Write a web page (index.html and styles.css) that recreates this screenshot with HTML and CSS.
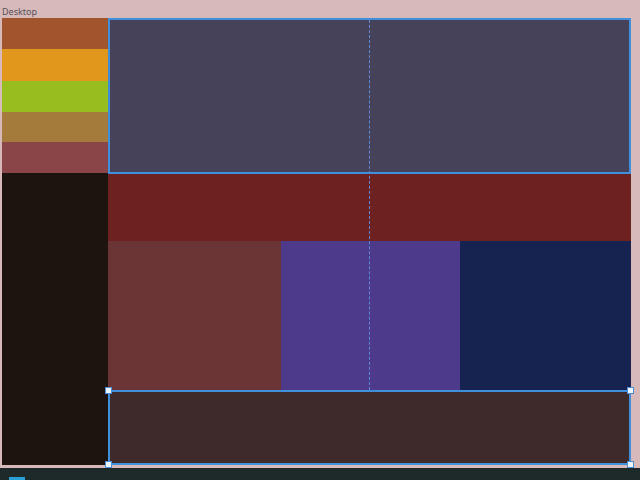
FILE: index.html
```html
<!DOCTYPE html>
<html>
<head>
<meta charset="utf-8">
<link rel="stylesheet" href="styles.css">
</head>
<body>
<div class="label">Desktop</div>
<div class="stage">
  <div class="side">
    <div class="sw s1"></div>
    <div class="sw s2"></div>
    <div class="sw s3"></div>
    <div class="sw s4"></div>
    <div class="sw s5"></div>
    <div class="rest"></div>
  </div>
  <div class="main">
    <div class="top"></div>
    <div class="red"></div>
    <div class="row">
      <div class="c1"></div>
      <div class="c2"></div>
      <div class="c3"></div>
    </div>
    <div class="bottom">
      <span class="h tl"></span><span class="h tr"></span><span class="h bl"></span><span class="h br"></span>
    </div>
    <div class="guide"></div>
  </div>
</div>
<div class="taskbar"><span class="task"></span></div>
</body>
</html>
```
FILE: styles.css
```css
html, body { margin: 0; padding: 0; }
body {
  width: 640px; height: 480px; overflow: hidden;
  background: #d8b9b9;
  font-family: "Noto Sans", "DejaVu Sans", sans-serif;
}
.label {
  height: 18px; padding-left: 2px;
  font-size: 9px; line-height: 24px; color: #56505a;
}
.stage { display: flex; padding-left: 2px; height: 447px; }
.side { width: 106px; display: flex; flex-direction: column; }
.sw { flex: none; }
.s1 { height: 31px; background: #a2552d; }
.s2 { height: 32px; background: #e0971b; }
.s3 { height: 31px; background: #97bd1f; }
.s4 { height: 30px; background: #a47b3b; }
.s5 { height: 31px; background: #8a4548; }
.rest { flex: 1; background: #1d1410; }
.main { width: 523px; display: flex; flex-direction: column; position: relative; }
.top { height: 156px; box-sizing: border-box; background: #45425a; border: 2px solid #3f8fdc; }
.red { height: 67px; background: #6d2121; }
.row { height: 149px; display: flex; }
.c1 { width: 173px; background: #6c3535; }
.c2 { width: 179px; background: #4e3a8b; }
.c3 { flex: 1; background: #162350; }
.bottom { height: 75px; box-sizing: border-box; background: #3e2a2a; border: 2px solid #3f8fdc; position: relative; }
.h { position: absolute; width: 5px; height: 5px; background: #eef4fb; border: 1px solid #4a8fd6; }
.tl { left: -5px; top: -5px; }
.tr { right: -5px; top: -5px; }
.bl { left: -5px; bottom: -5px; }
.br { right: -5px; bottom: -5px; }
.guide { position: absolute; left: 261px; top: 2px; height: 370px; border-left: 1px dashed #5c8ad8; }
.taskbar { margin-top: 3px; height: 12px; background: #1e2a29; position: relative; }
.task { position: absolute; left: 9px; top: 9px; width: 16px; height: 3px; background: #2aa0d8; }
```
